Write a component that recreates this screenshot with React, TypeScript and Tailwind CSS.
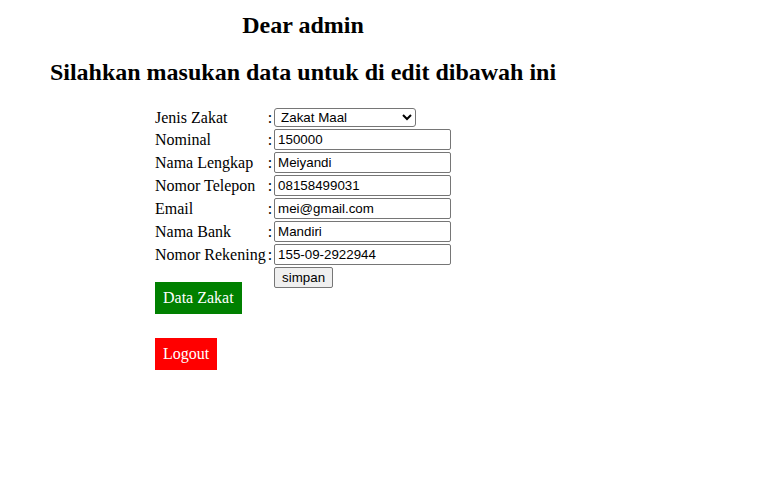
import React from "react";

const rows: { label: string; value: string }[] = [
  { label: "Nominal", value: "150000" },
  { label: "Nama Lengkap", value: "Meiyandi" },
  { label: "Nomor Telepon", value: "08158499031" },
  { label: "Email", value: "mei@gmail.com" },
  { label: "Nama Bank", value: "Mandiri" },
  { label: "Nomor Rekening", value: "155-09-2922944" },
];

export default function App() {
  return (
    <div className="w-[774px] h-[486px] bg-white text-black font-['Liberation_Serif',serif] text-[16px] leading-[normal]">
      <div className="w-[606px] text-center pt-[12px]">
        <h2 className="text-[24px] font-bold leading-[normal]">Dear admin</h2>
        <h2 className="text-[24px] font-bold leading-[normal] mt-[20px]">
          Silahkan masukan data untuk di edit dibawah ini
        </h2>
      </div>
      <table className="ml-[153px] mt-[20px] border-separate border-spacing-[2px]">
        <tbody>
          <tr>
            <td className="align-middle">Jenis Zakat</td>
            <td>:</td>
            <td>
              <select
                defaultValue="Zakat Maal"
                className="w-[142px] h-[19px] border border-[#767676] rounded-[3px] bg-white font-['Liberation_Sans',sans-serif] text-[13.333px] leading-none pl-[2px] block"
              >
                <option>Zakat Maal</option>
                <option>Zakat Fitrah</option>
              </select>
            </td>
          </tr>
          {rows.map((r) => (
            <tr key={r.label}>
              <td className="whitespace-nowrap">{r.label}</td>
              <td>:</td>
              <td>
                <input
                  defaultValue={r.value}
                  className="block w-[177px] h-[21px] border border-[#767676] rounded-[2px] px-[3px] bg-white font-['Liberation_Sans',sans-serif] text-[13.333px] leading-[normal] outline-none"
                />
              </td>
            </tr>
          ))}
          <tr>
            <td></td>
            <td></td>
            <td>
              <button className="block h-[21px] px-[7px] border border-[#767676] rounded-[2px] bg-[#efefef] font-['Liberation_Sans',sans-serif] text-[13.333px] leading-none">
                simpan
              </button>
            </td>
          </tr>
        </tbody>
      </table>
      <div className="ml-[155px] mt-[-8px] flex flex-col items-start gap-[24px]">
        <a className="block bg-[#008000] text-white px-[8px] py-[7px] leading-[18px]">Data Zakat</a>
        <a className="block bg-[#ff0000] text-white px-[8px] py-[7px] leading-[18px]">Logout</a>
      </div>
    </div>
  );
}
